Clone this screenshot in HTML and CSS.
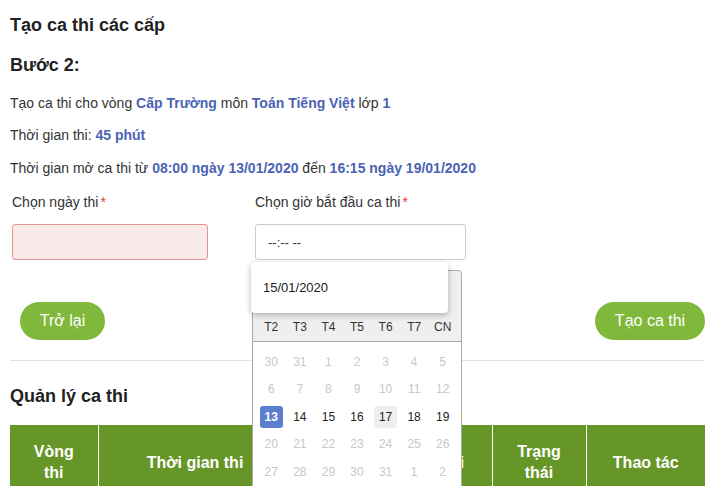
FILE: index.html
```html
<!DOCTYPE html>
<html lang="vi">
<head>
  <meta charset="UTF-8">
  <meta name="viewport" content="width=device-width, initial-scale=1.0">
  <title>Tạo ca thi các cấp</title>
  <link rel="stylesheet" href="styles.css">
</head>
<body>
  <div class="page">
    <h1 class="page-title">Tạo ca thi các cấp</h1>
    <h2 class="step-title">Bước 2:</h2>

    <p class="info first">Tạo ca thi cho vòng <b>Cấp Trường</b> môn <b>Toán Tiếng Việt</b> lớp <b>1</b></p>
    <p class="info">Thời gian thi: <b>45 phút</b></p>
    <p class="info last">Thời gian mở ca thi từ <b>08:00 ngày 13/01/2020</b> đến <b>16:15 ngày 19/01/2020</b></p>

    <!-- Chọn ngày & giờ -->
    <div class="form-row">
      <div class="field field-date">
        <label for="exam-date">Chọn ngày thi<span class="req">*</span></label>
        <input type="text" id="exam-date" class="input input-error">
      </div>
      <div class="field field-time">
        <label for="exam-time">Chọn giờ bắt đầu ca thi<span class="req">*</span></label>
        <input type="text" id="exam-time" class="input" placeholder="--:-- --">

        <div class="calendar">
          <div class="calendar-head">
            <div class="calendar-month">Tháng 1 2020</div>
            <div class="calendar-weekdays">
              <span>T2</span><span>T3</span><span>T4</span><span>T5</span><span>T6</span><span>T7</span><span>CN</span>
            </div>
          </div>
          <div class="calendar-days">
            <span class="muted">30</span><span class="muted">31</span><span class="muted">1</span><span class="muted">2</span><span class="muted">3</span><span class="muted">4</span><span class="muted">5</span>
            <span class="muted">6</span><span class="muted">7</span><span class="muted">8</span><span class="muted">9</span><span class="muted">10</span><span class="muted">11</span><span class="muted">12</span>
            <span class="selected">13</span><span>14</span><span>15</span><span>16</span><span class="today">17</span><span>18</span><span>19</span>
            <span class="muted">20</span><span class="muted">21</span><span class="muted">22</span><span class="muted">23</span><span class="muted">24</span><span class="muted">25</span><span class="muted">26</span>
            <span class="muted">27</span><span class="muted">28</span><span class="muted">29</span><span class="muted">30</span><span class="muted">31</span><span class="muted">1</span><span class="muted">2</span>
          </div>
        </div>

        <div class="suggest">15/01/2020</div>
      </div>
    </div>

    <div class="actions">
      <button class="btn">Trở lại</button>
      <button class="btn btn-wide">Tạo ca thi</button>
    </div>

    <hr class="divider">

    <h3 class="section-title">Quản lý ca thi</h3>

    <table class="exam-table">
      <thead>
        <tr>
          <th class="col-round">Vòng thi</th>
          <th class="col-time">Thời gian thi</th>
          <th class="col-date">Ngày thi</th>
          <th class="col-shift">Ca thi</th>
          <th class="col-status">Trạng thái</th>
          <th class="col-action">Thao tác</th>
        </tr>
      </thead>
    </table>
  </div>
</body>
</html>
```

FILE: styles.css
```css
body {
  margin: 0;
  font-family: "Liberation Sans", Arial, sans-serif;
  color: #333;
  background-color: #fff;
}
.page {
  padding: 14px 5px 0 10px;
}
.page-title, .step-title, .section-title {
  margin: 0;
  font-size: 18px;
  line-height: 22px;
  font-weight: bold;
  color: #222;
}
.step-title {
  margin-top: 18px;
}
.info {
  margin: 12px 0 0;
  font-size: 14px;
  line-height: 20px;
}
.info.first {
  margin-top: 17px;
}
.info.last {
  margin-top: 13px;
}
.info b {
  color: #4b63b3;
}
.form-row {
  display: flex;
  gap: 47px;
  margin-top: 14px;
  padding-left: 2px;
}
.field label {
  display: block;
  font-size: 14px;
  line-height: 20px;
  margin-bottom: 12px;
}
.req {
  color: #e53935;
  margin-left: 2px;
}
.field-date {
  width: 196px;
}
.field-time {
  width: 211px;
  position: relative;
}
.input {
  display: block;
  box-sizing: border-box;
  width: 100%;
  height: 36px;
  margin: 0;
  padding: 0 12px;
  border: 1px solid #ccc;
  border-radius: 3px;
  font-family: inherit;
  font-size: 13px;
  color: #333;
  background-color: #fff;
  outline: none;
}
.input::placeholder {
  color: #333;
}
.input-error {
  background-color: #f9eaea;
  border-color: #e59494;
}
/* popup chọn ngày */
.suggest {
  position: absolute;
  top: 70px;
  left: -4px;
  width: 197px;
  height: 51px;
  box-sizing: border-box;
  padding-left: 12px;
  line-height: 51px;
  font-size: 13px;
  color: #222;
  background-color: #fff;
  border-radius: 4px;
  box-shadow: 0 2px 6px rgba(0, 0, 0, 0.28);
  z-index: 3;
}
.calendar {
  position: absolute;
  top: 78px;
  left: -3px;
  width: 210px;
  height: 240px;
  box-sizing: border-box;
  border: 1px solid #aaa;
  border-radius: 4px 4px 0 0;
  background-color: #fff;
  z-index: 2;
  font-size: 12px;
}
.calendar-head {
  background-color: #efefef;
  border-bottom: 1px solid #aaa;
  border-radius: 4px 4px 0 0;
  padding: 0 4px;
}
.calendar-month {
  height: 42px;
  line-height: 42px;
  text-align: center;
  font-weight: bold;
  color: #333;
}
.calendar-weekdays {
  display: grid;
  grid-template-columns: repeat(7, 1fr);
  height: 28px;
  line-height: 28px;
  text-align: center;
  color: #333;
}
.calendar-days {
  display: grid;
  grid-template-columns: repeat(7, 1fr);
  grid-auto-rows: 27.5px;
  padding: 6px 4px 0;
  align-items: center;
  justify-items: center;
}
.calendar-days span {
  width: 23px;
  height: 22px;
  line-height: 22px;
  text-align: center;
  border-radius: 3px;
  color: #222;
}
.calendar-days .muted {
  color: #c8c8c8;
}
.calendar-days .selected {
  background-color: #5b7fcf;
  color: #fff;
  font-weight: bold;
}
.calendar-days .today {
  background-color: #eee;
}
.actions {
  display: flex;
  justify-content: space-between;
  margin-top: 42px;
  padding-left: 10px;
}
.btn {
  height: 38px;
  width: 85px;
  border: none;
  border-radius: 19px;
  background-color: #80b83c;
  color: #fff;
  font-family: inherit;
  font-size: 16px;
  cursor: pointer;
}
.btn-wide {
  width: 110px;
}
.divider {
  margin: 20px 0 0;
  border: none;
  border-top: 1px solid #e2e2e2;
}
.section-title {
  margin-top: 24px;
}
.exam-table {
  margin-top: 18px;
  width: 695px;
  border-collapse: collapse;
  table-layout: fixed;
}
.exam-table th {
  box-sizing: border-box;
  height: 74px;
  padding: 0 15px;
  background-color: #669628;
  color: #fff;
  font-size: 16px;
  line-height: 21px;
  border-left: 1px solid #fff;
  border-right: 1px solid #fff;
}
.exam-table th:first-child {
  border-left: none;
}
.exam-table th:last-child {
  border-right: none;
}
.col-round { width: 88px; }
.col-time { width: 194px; }
.col-date { width: 100px; }
.col-shift { width: 100px; }
.col-status { width: 94px; }
.col-action { width: 119px; }
```
